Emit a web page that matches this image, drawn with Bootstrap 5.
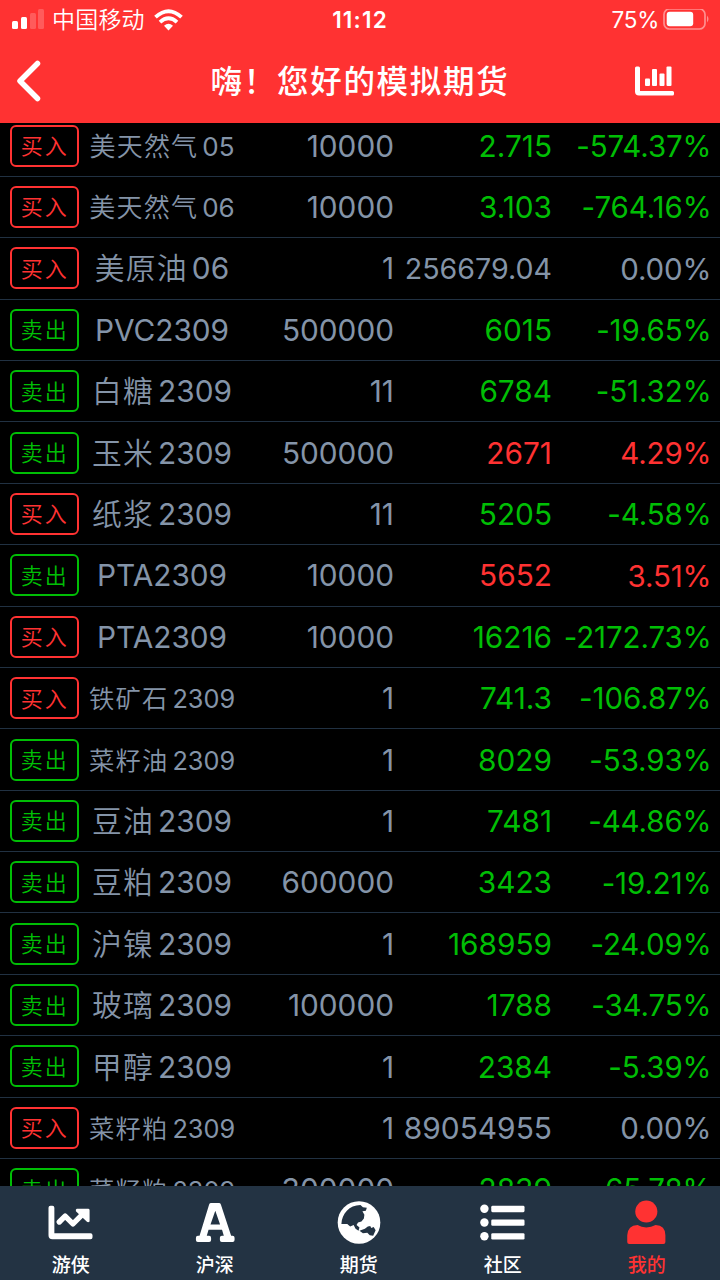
<!DOCTYPE html>
<html lang="zh-CN">
<head>
<meta charset="utf-8">
<meta name="viewport" content="width=device-width, initial-scale=1">
<title>模拟期货</title>
<link href="https://cdn.jsdelivr.net/npm/bootstrap@5.3.0/dist/css/bootstrap.min.css" rel="stylesheet">
<style>
:root{--app-red:#ff3232;--app-green:#00be05;--app-grey:#8494a8;--app-navy:#233343}
body{font-family:Inter,"Noto Sans CJK SC",sans-serif;background:#000;color:var(--app-grey);letter-spacing:0}
.screen{height:1280px;width:720px}
.app-top{height:123px;background:var(--app-red);z-index:2}
.status{height:40px;font-size:22px;line-height:40px}
.carrier{font-size:23px;letter-spacing:.2px;margin-left:7px;margin-right:9px;font-weight:350}
.side{width:300px}
.clock{font-weight:600;font-size:22.5px;letter-spacing:1.2px}
.battery-text{font-size:22.5px;letter-spacing:-.3px;margin-right:4px}
.titlebar{height:83px;padding:0 46px 2px 16px}
.title{font-size:31.5px;letter-spacing:1.7px;font-weight:500;margin-left:43px;padding-top:2px}
.rows{margin-top:-7.6px}
.quote{height:61.4px;border-bottom:1px solid #213142;padding:0 10px;font-size:29.8px;line-height:1;flex:none}
.tag{width:68.5px;height:42px;border:2px solid;border-radius:6px;font-size:22px;letter-spacing:2px;padding:1px 0 0 1px;font-weight:350;flex:none}
.name{width:167px;flex:none;white-space:nowrap;padding-top:2px}
.name i{font-style:normal;letter-spacing:1.2px;margin-right:4px;font-weight:350}
.name.sm{font-size:25.3px}
.name.four{font-size:26px}
.amount{width:148.5px;flex:none;padding-top:2px}
.price{width:158px;flex:none;white-space:nowrap;padding-top:2px}
.price.long{font-size:28.6px}
.price.whole{font-size:29.9px}
.rate{width:159.500px;flex:none;white-space:nowrap;padding-top:2px;font-size:29.5px;letter-spacing:-.1px}
.up{color:var(--app-red)}
.down{color:var(--app-green)}
.tabs{height:94px;background:var(--app-navy);z-index:2;flex:none}
.tabs a{width:144px;color:#fff;font-size:19px;line-height:28px;font-weight:500;padding:14px 2.5px 0 0}
.tabs svg{height:46px;width:48px;margin-bottom:7px}
.tabs a.current{color:var(--app-red)}
</style>
</head>
<body>
<div class="screen d-flex flex-column overflow-hidden">
<header class="app-top position-relative text-white flex-shrink-0">
  <div class="status d-flex justify-content-between">
    <div class="side d-flex align-items-center ps-2">
      <svg class="ms-1" width="33" height="22" viewBox="0 0 33 22" fill="#fff"><rect y="12" width="6" height="8" rx="1.5"/><rect x="9" y="8" width="6" height="12" rx="1.5"/><g opacity=".2"><rect x="18" y="4" width="6" height="16" rx="1.5"/><rect x="26" y="0" width="6" height="20" rx="1.5"/></g></svg>
      <span class="carrier">中国移动</span>
      <svg width="29" height="22" viewBox="0 0 29 22" fill="none" stroke="#fff" stroke-width="3.8"><path d="M1.5 8.2Q14.500-3.900 27.500 8.200M6 13.200Q14.500 5.500 23 13.200"/><path d="M14.500 21.500 10 16.700Q14.500 13 19 16.700Z" fill="#fff" stroke="none"/></svg>
    </div>
    <span class="clock">11:12</span>
    <div class="side d-flex align-items-center justify-content-end">
      <span class="battery-text">75%</span>
      <svg class="me-2 pe-0" width="49" height="22" viewBox="0 0 49 22"><rect x="1" y="0" width="41" height="20" rx="5.500" fill="none" stroke="#fff" stroke-opacity=".45" stroke-width="1.700"/><rect x="3.700" y="2.700" width="26.500" height="14.600" rx="3" fill="#fff"/><path d="M44 6.500q3 3.500 0 7z" fill="#fff" opacity=".45"/></svg>
    </div>
  </div>
  <div class="titlebar d-flex align-items-center justify-content-between">
    <svg width="26" height="42" viewBox="0 0 26 42" fill="none" stroke="#fff" stroke-width="5.500" stroke-linecap="round" stroke-linejoin="round"><path d="M21.500 3.500 4 21 21.500 38.500"/></svg>
    <div class="title">嗨！您好的模拟期货</div>
    <svg width="39" height="30" viewBox="0 0 39 30" fill="#fff"><path d="M0 2Q0 .500 1.500.500h2Q5 .500 5 2V25H37.500Q39 25 39 26.500v1.500Q39 29.500 37.500 29.500H4Q0 29.500 0 25.500Z"/><rect x="10" y="12.500" width="5" height="7.500" rx="1"/><rect x="17" y="3" width="5" height="17" rx="1"/><rect x="24.500" y="7.500" width="5" height="12.500" rx="1"/><rect x="31.500" y=".500" width="5" height="19.500" rx="1"/></svg>
  </div>
</header>
<main class="rows flex-grow-1 overflow-hidden d-flex flex-column">
  <div class="quote d-flex align-items-center"><span class="tag up d-flex align-items-center justify-content-center">买入</span><span class="name four text-center"><i>美天然气</i>05</span><span class="amount text-end">10000</span><span class="price down text-end">2.715</span><span class="rate down text-end">-574.37%</span></div>
  <div class="quote d-flex align-items-center"><span class="tag up d-flex align-items-center justify-content-center">买入</span><span class="name four text-center"><i>美天然气</i>06</span><span class="amount text-end">10000</span><span class="price down text-end">3.103</span><span class="rate down text-end">-764.16%</span></div>
  <div class="quote d-flex align-items-center"><span class="tag up d-flex align-items-center justify-content-center">买入</span><span class="name text-center"><i>美原油</i>06</span><span class="amount text-end">1</span><span class="price long text-end">256679.04</span><span class="rate text-end">0.00%</span></div>
  <div class="quote d-flex align-items-center"><span class="tag down d-flex align-items-center justify-content-center">卖出</span><span class="name text-center">PVC2309</span><span class="amount text-end">500000</span><span class="price down text-end">6015</span><span class="rate down text-end">-19.65%</span></div>
  <div class="quote d-flex align-items-center"><span class="tag down d-flex align-items-center justify-content-center">卖出</span><span class="name text-center"><i>白糖</i>2309</span><span class="amount text-end">11</span><span class="price down text-end">6784</span><span class="rate down text-end">-51.32%</span></div>
  <div class="quote d-flex align-items-center"><span class="tag down d-flex align-items-center justify-content-center">卖出</span><span class="name text-center"><i>玉米</i>2309</span><span class="amount text-end">500000</span><span class="price up text-end">2671</span><span class="rate up text-end">4.29%</span></div>
  <div class="quote d-flex align-items-center"><span class="tag up d-flex align-items-center justify-content-center">买入</span><span class="name text-center"><i>纸浆</i>2309</span><span class="amount text-end">11</span><span class="price down text-end">5205</span><span class="rate down text-end">-4.58%</span></div>
  <div class="quote d-flex align-items-center"><span class="tag down d-flex align-items-center justify-content-center">卖出</span><span class="name text-center">PTA2309</span><span class="amount text-end">10000</span><span class="price up text-end">5652</span><span class="rate up text-end">3.51%</span></div>
  <div class="quote d-flex align-items-center"><span class="tag up d-flex align-items-center justify-content-center">买入</span><span class="name text-center">PTA2309</span><span class="amount text-end">10000</span><span class="price down text-end">16216</span><span class="rate down text-end">-2172.73%</span></div>
  <div class="quote d-flex align-items-center"><span class="tag up d-flex align-items-center justify-content-center">买入</span><span class="name sm text-center"><i>铁矿石</i>2309</span><span class="amount text-end">1</span><span class="price down text-end">741.3</span><span class="rate down text-end">-106.87%</span></div>
  <div class="quote d-flex align-items-center"><span class="tag down d-flex align-items-center justify-content-center">卖出</span><span class="name sm text-center"><i>菜籽油</i>2309</span><span class="amount text-end">1</span><span class="price down text-end">8029</span><span class="rate down text-end">-53.93%</span></div>
  <div class="quote d-flex align-items-center"><span class="tag down d-flex align-items-center justify-content-center">卖出</span><span class="name text-center"><i>豆油</i>2309</span><span class="amount text-end">1</span><span class="price down text-end">7481</span><span class="rate down text-end">-44.86%</span></div>
  <div class="quote d-flex align-items-center"><span class="tag down d-flex align-items-center justify-content-center">卖出</span><span class="name text-center"><i>豆粕</i>2309</span><span class="amount text-end">600000</span><span class="price down text-end">3423</span><span class="rate down text-end">-19.21%</span></div>
  <div class="quote d-flex align-items-center"><span class="tag down d-flex align-items-center justify-content-center">卖出</span><span class="name text-center"><i>沪镍</i>2309</span><span class="amount text-end">1</span><span class="price down text-end">168959</span><span class="rate down text-end">-24.09%</span></div>
  <div class="quote d-flex align-items-center"><span class="tag down d-flex align-items-center justify-content-center">卖出</span><span class="name text-center"><i>玻璃</i>2309</span><span class="amount text-end">100000</span><span class="price down text-end">1788</span><span class="rate down text-end">-34.75%</span></div>
  <div class="quote d-flex align-items-center"><span class="tag down d-flex align-items-center justify-content-center">卖出</span><span class="name text-center"><i>甲醇</i>2309</span><span class="amount text-end">1</span><span class="price down text-end">2384</span><span class="rate down text-end">-5.39%</span></div>
  <div class="quote d-flex align-items-center"><span class="tag up d-flex align-items-center justify-content-center">买入</span><span class="name sm text-center"><i>菜籽粕</i>2309</span><span class="amount text-end">1</span><span class="price whole text-end">89054955</span><span class="rate text-end">0.00%</span></div>
  <div class="quote d-flex align-items-center"><span class="tag down d-flex align-items-center justify-content-center">卖出</span><span class="name sm text-center"><i>菜籽粕</i>2309</span><span class="amount text-end">300000</span><span class="price down text-end">2839</span><span class="rate down text-end">-65.78%</span></div>
</main>
<nav class="tabs d-flex position-relative">
  <a class="d-flex flex-column align-items-center text-decoration-none"><svg viewBox="0 0 48 46" fill="#fff"><path d="M1 8Q1 6 3 6H5Q7 6 7 8V34H44Q46 34 46 36V38Q46 40 44 40H5Q1 40 1 36Z"/><path d="M12 22.500 18 16.500 26 24.500 36.500 14" fill="none" stroke="#fff" stroke-width="5.500" stroke-linejoin="round" stroke-linecap="round"/><path d="M30 9H41.500Q43 9 43 10.500V22Q41.500 23.500 40 22L29 11.500Q28.500 9.500 30 9Z"/></svg>游侠</a>
  <a class="d-flex flex-column align-items-center text-decoration-none"><svg viewBox="0 0 48 46" fill="#fff"><path fill-rule="evenodd" d="M20 3h8q1.500 0 2 1.500L40.500 36.500H42q2 0 2 2v2.500q0 2-2 2H31q-2 0-2-2v-2.500q0-2 2-2h2l-1.800-6H17.400l-1.800 6H18q2 0 2 2v2.500q0 2-2 2H6.500q-2 0-2-2v-2.500q0-2 2-2H8.200L18 4.500Q18.500 3 20 3ZM24.300 11 19.400 25H29.200Z"/></svg>沪深</a>
  <a class="d-flex flex-column align-items-center text-decoration-none"><svg viewBox="0 0 48 46"><circle cx="24" cy="23" r="21.800" fill="#fff"/><path fill="#233343" d="M6 24.500C6.500 14 14 5 25.500 5L28 7.500 32 8 31 11 27.500 11.500 29.500 15 29 19 26.500 22 23 23 21.500 25.500 24.500 28 23.500 31.500 20.500 29.500 18.500 25.500 15 27 12 24.500ZM24.500 31.500 30 29.500 33 27 35.500 26.500 36.500 28.500 39 27.500 41 31 38.500 36.500 35 36 32.500 33.500 28 34Z"/></svg>期货</a>
  <a class="d-flex flex-column align-items-center text-decoration-none"><svg viewBox="0 0 48 46" fill="#fff"><circle cx="5" cy="9" r="4.300"/><circle cx="5" cy="23" r="4.300"/><circle cx="5" cy="37" r="4.300"/><rect x="12" y="6" width="34" height="6.400" rx="1.300"/><rect x="12" y="20" width="34" height="6.400" rx="1.300"/><rect x="12" y="34" width="34" height="6.400" rx="1.300"/></svg>社区</a>
  <a class="current d-flex flex-column align-items-center text-decoration-none"><svg viewBox="0 0 48 46" fill="#ff3232"><circle cx="23.300" cy="11.700" r="11.300"/><path d="M3.800 43V36Q4.300 26 14.300 25.500 18.300 28 23.300 28T32.800 25.500Q42.800 26 42.800 36V43Q42.800 45 40.800 45H5.800Q3.800 45 3.800 43Z"/></svg>我的</a>
</nav>
</div>
<script src="https://cdn.jsdelivr.net/npm/bootstrap@5.3.0/dist/js/bootstrap.bundle.min.js"></script>
</body>
</html>
